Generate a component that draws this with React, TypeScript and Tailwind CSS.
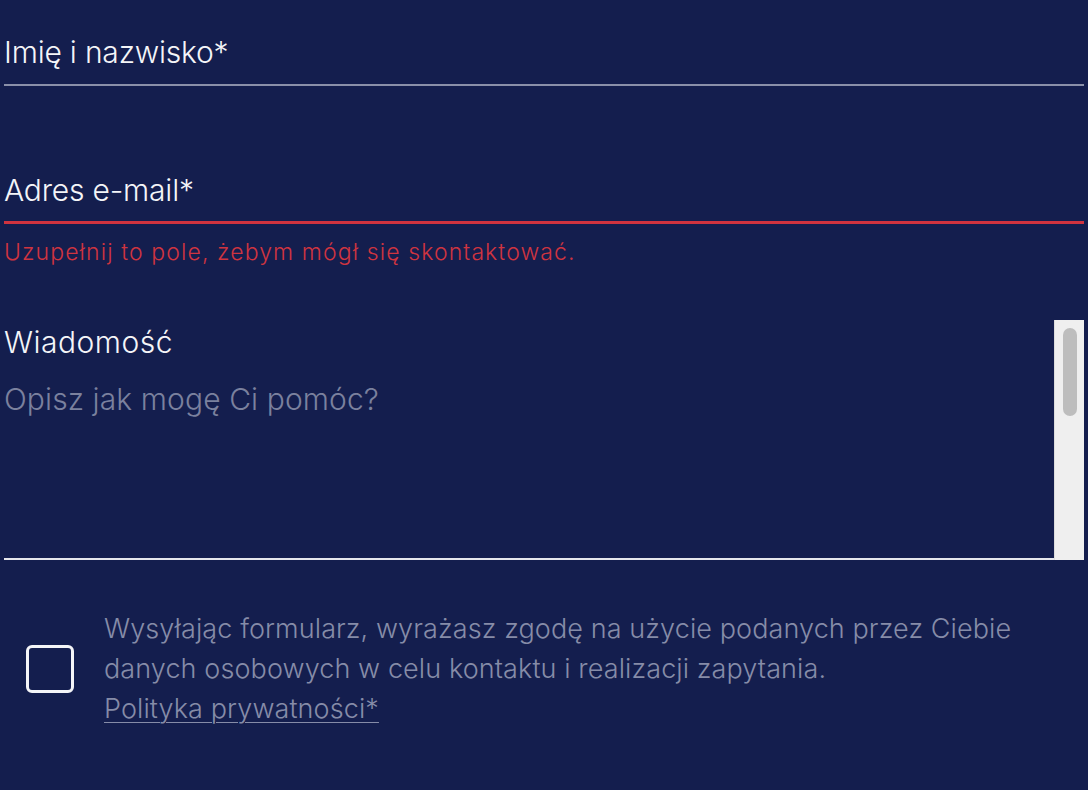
import { useState } from 'react';

const font = { fontFamily: 'Inter, "Noto Sans", sans-serif' };

export default function App() {
  const [agree, setAgree] = useState(false);

  return (
    <div className="min-h-[790px] w-full bg-[#141e4e] text-white" style={font}>
      <form className="flex flex-col pl-1 pr-1 pt-[30px]">
        {/* Name */}
        <label className="flex flex-col">
          <span className="text-[30px] font-light leading-[44px] tracking-[-0.2px] text-[#f4f5f8]">Imię i nazwisko*</span>
          <span className="mt-[10px] h-[2px] w-full bg-[#8a90a9]" />
        </label>

        {/* Email */}
        <label className="mt-[82px] flex flex-col">
          <span className="text-[30px] font-light leading-[44px] tracking-[-0.2px] text-[#f4f5f8]">Adres e-mail*</span>
          <span className="mt-[9px] h-[3px] w-full bg-[#d0333f]" />
          <span className="mt-[13px] text-[23px] font-light leading-[30px] tracking-[1.1px] text-[#cf3440]">
            Uzupełnij to pole, żebym mógł się skontaktować.
          </span>
        </label>

        {/* Message */}
        <div className="mt-[53px] flex h-[240px]">
          <div className="flex flex-1 flex-col border-b-2 border-[#e6e7ec]">
            <span className="text-[30px] font-light leading-[44px] tracking-[0.5px] text-[#f4f5f8]">Wiadomość</span>
            <span className="mt-[13px] text-[30px] font-light leading-[44px] tracking-[0.1px] text-[#7b819e]">Opisz jak mogę Ci pomóc?</span>
          </div>
          <div className="flex w-[30px] justify-center border-l border-[#dcdcdc] bg-[#efefef] pt-[8px]">
            <div className="h-[88px] w-[14px] rounded-full bg-[#bdbdbd]" />
          </div>
        </div>

        {/* Consent */}
        <div className="mt-[49px] flex items-center">
          <button
            type="button"
            onClick={() => setAgree(!agree)}
            className="ml-[22px] h-[48px] w-[48px] shrink-0 rounded-[6px] border-[3px] border-[#f4f5f8]"
            aria-checked={agree}
          />
          <p className="ml-[30px] text-[27px] font-light leading-[40px] tracking-[0.1px] text-[#868ca8]">
            Wysyłając formularz, wyrażasz zgodę na użycie podanych przez Ciebie
            <br />
            danych osobowych w celu kontaktu i realizacji zapytania.
            <br />
            <a href="#" className="underline decoration-1 underline-offset-[4px]">Polityka prywatności*</a>
          </p>
        </div>
      </form>
    </div>
  );
}
